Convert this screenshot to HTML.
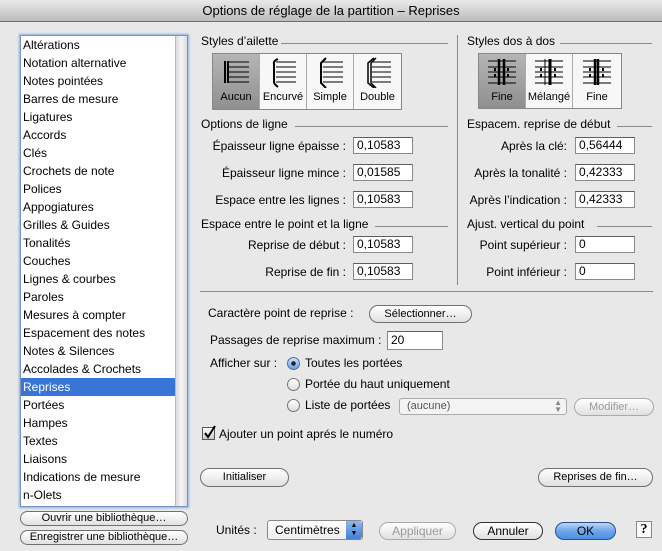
<!DOCTYPE html>
<html><head><meta charset="utf-8"><style>
*{margin:0;padding:0;box-sizing:border-box}
body{width:662px;height:551px;background:#e8e8e8;font-family:"Liberation Sans",sans-serif;font-size:12px;color:#000;position:relative;overflow:hidden}
.a{position:absolute;white-space:nowrap}
.title{left:0;top:0;width:662px;height:22px;background:linear-gradient(#e9e9e9,#bdbdbd);border-bottom:1px solid #6f6f6f;text-align:center;font-size:13px;line-height:22px}
.list{left:20px;top:35px;width:168px;height:472px;background:#fff;border:1px solid #7a93c0;box-shadow:0 0 2px 1px #8ab0e0}
.list div{height:18px;line-height:18px;padding-left:2px}
.list .sel{background:#3875d7;color:#fff}
.sb{position:absolute;right:0;top:0;width:12px;height:100%;background:linear-gradient(90deg,#dcdcdc,#f4f4f4,#dcdcdc);border-left:1px solid #bbb}
.btn{position:absolute;border:1px solid #707070;border-radius:10px;background:linear-gradient(#fff,#f0f0f0 50%,#e0e0e0);text-align:center;font-size:11px}
.dis{color:#999;border-color:#aaa}
.inp{position:absolute;background:#fff;border:1px solid #8a8a8a;border-top-color:#5e5e5e;height:17px;line-height:15px;padding-left:3px;font-size:12px}
.lbl{position:absolute;text-align:right;white-space:nowrap}
.hd{position:absolute;white-space:nowrap}
.ln{position:absolute;height:1px;background:#8a8a8a}
.seg{position:absolute;border:1px solid #888;display:flex;background:#f7f7f7}
.seg div{border-right:1px solid #aaa;text-align:center;font-size:11px;padding-top:2px}
.seg div:last-child{border-right:none}
.seg .on{background:linear-gradient(#b5b5b5,#8f8f8f)}
.radio{position:absolute;width:13px;height:13px;border:1px solid #777;border-radius:50%;background:linear-gradient(#fff,#ddd)}
</style></head><body>
<div class="a title">Options de réglage de la partition – Reprises</div>

<div class="a list">
<div>Altérations</div><div>Notation alternative</div><div>Notes pointées</div><div>Barres de mesure</div><div>Ligatures</div><div>Accords</div><div>Clés</div><div>Crochets de note</div><div>Polices</div><div>Appogiatures</div><div>Grilles &amp; Guides</div><div>Tonalités</div><div>Couches</div><div>Lignes &amp; courbes</div><div>Paroles</div><div>Mesures à compter</div><div>Espacement des notes</div><div>Notes &amp; Silences</div><div>Accolades &amp; Crochets</div><div class="sel">Reprises</div><div>Portées</div><div>Hampes</div><div>Textes</div><div>Liaisons</div><div>Indications de mesure</div><div>n-Olets</div>
<span class="sb"></span>
</div>
<div class="btn" style="left:20px;top:511px;width:168px;height:15px;line-height:13px">Ouvrir une bibliothèque…</div>
<div class="btn" style="left:20px;top:530px;width:168px;height:15px;line-height:13px">Enregistrer une bibliothèque…</div>

<div class="hd" style="left:201px;top:34px">Styles d’ailette</div>
<div class="ln" style="left:281px;top:43px;width:167px"></div>
<div class="seg" style="left:212px;top:53px;width:190px;height:57px">
<div class="on" style="width:47px"><svg width="30" height="32" viewBox="0 0 30 32"><g stroke="#000"><path d="M4 5v22M7 5v22" stroke-width="2"/><path d="M8 6h20M8 11h20M8 16h20M8 21h20M8 26h20"/></g></svg><br>Aucun</div>
<div style="width:47px"><svg width="30" height="32" viewBox="0 0 30 32"><g stroke="#000" fill="none"><path d="M10 3Q5 5 6 8v18Q6 28 10 31" stroke-width="2"/><path d="M8 6h20M8 11h20M8 16h20M8 21h20M8 26h20"/></g></svg><br>Encurvé</div>
<div style="width:47px"><svg width="30" height="32" viewBox="0 0 30 32"><g stroke="#000" fill="none"><path d="M11 2L6 7v20l5 5" stroke-width="2"/><path d="M8 6h20M8 11h20M8 16h20M8 21h20M8 26h20"/></g></svg><br>Simple</div>
<div style="width:47px"><svg width="30" height="32" viewBox="0 0 30 32"><g stroke="#000" fill="none"><path d="M11 2L5 7v20l6 5M13 2L8 7v20l5 5" stroke-width="1.5"/><path d="M9 6h19M9 11h19M9 16h19M9 21h19M9 26h19"/></g></svg><br>Double</div>
</div>

<div style="position:absolute;left:457px;top:35px;width:1px;height:250px;background:#8a8a8a"></div>
<div class="hd" style="left:467px;top:34px">Styles dos à dos</div>
<div class="ln" style="left:560px;top:43px;width:92px"></div>
<div class="seg" style="left:478px;top:53px;width:144px;height:56px">
<div class="on" style="width:47px"><svg width="36" height="32" viewBox="0 0 36 32"><g stroke="#000"><path d="M4 5h28M4 11h28M4 16h28M4 21h28M4 27h28"/><path d="M15 3v26M20 3v26" stroke-width="2.5"/><path d="M11 12v3M11 18v3M24 12v3M24 18v3" stroke-width="2"/></g></svg><br>Fine</div>
<div style="width:47px"><svg width="36" height="32" viewBox="0 0 36 32"><g stroke="#000"><path d="M4 5h28M4 11h28M4 16h28M4 21h28M4 27h28"/><path d="M14 3v26" stroke-width="1"/><path d="M19 3v26" stroke-width="3"/><path d="M10 12v3M10 18v3M24 12v3M24 18v3" stroke-width="2"/></g></svg><br>Mélangé</div>
<div style="width:48px"><svg width="36" height="32" viewBox="0 0 36 32"><g stroke="#000"><path d="M4 5h28M4 11h28M4 16h28M4 21h28M4 27h28"/><path d="M16 3v26M19 3v26" stroke-width="2.5"/><path d="M11 12v3M11 18v3M24 12v3M24 18v3" stroke-width="2"/></g></svg><br>Fine</div>
</div>

<div class="hd" style="left:201px;top:117px">Options de ligne</div>
<div class="ln" style="left:295px;top:126px;width:153px"></div>
<div class="lbl" style="right:316px;top:139px">Épaisseur ligne épaisse :</div>
<div class="inp" style="left:353px;top:137px;width:60px">0,10583</div>
<div class="lbl" style="right:316px;top:166px">Épaisseur ligne mince :</div>
<div class="inp" style="left:353px;top:164px;width:60px">0,01585</div>
<div class="lbl" style="right:316px;top:193px">Espace entre les lignes :</div>
<div class="inp" style="left:353px;top:191px;width:60px">0,10583</div>
<div class="hd" style="left:201px;top:217px">Espace entre le point et la ligne</div>
<div class="ln" style="left:375px;top:226px;width:73px"></div>
<div class="lbl" style="right:316px;top:238px">Reprise de début :</div>
<div class="inp" style="left:353px;top:236px;width:60px">0,10583</div>
<div class="lbl" style="right:316px;top:265px">Reprise de fin :</div>
<div class="inp" style="left:353px;top:263px;width:60px">0,10583</div>

<div class="hd" style="left:467px;top:117px">Espacem. reprise de début</div>
<div class="ln" style="left:617px;top:126px;width:35px"></div>
<div class="lbl" style="right:95px;top:139px">Après la clé:</div>
<div class="inp" style="left:575px;top:137px;width:60px">0,56444</div>
<div class="lbl" style="right:95px;top:166px">Après la tonalité :</div>
<div class="inp" style="left:575px;top:164px;width:60px">0,42333</div>
<div class="lbl" style="right:95px;top:193px">Après l’indication :</div>
<div class="inp" style="left:575px;top:191px;width:60px">0,42333</div>
<div class="hd" style="left:467px;top:217px">Ajust. vertical du point</div>
<div class="ln" style="left:597px;top:226px;width:55px"></div>
<div class="lbl" style="right:95px;top:238px">Point supérieur :</div>
<div class="inp" style="left:575px;top:236px;width:60px">0</div>
<div class="lbl" style="right:95px;top:265px">Point inférieur :</div>
<div class="inp" style="left:575px;top:263px;width:60px">0</div>

<div class="ln" style="left:200px;top:291px;width:453px"></div>

<div class="hd" style="left:208px;top:306px">Caractère point de reprise :</div>
<div class="btn" style="left:369px;top:305px;width:103px;height:18px;line-height:16px">Sélectionner…</div>
<div class="hd" style="left:210px;top:333px">Passages de reprise maximum :</div>
<div class="inp" style="left:387px;top:331px;width:56px;height:19px;line-height:17px">20</div>
<div class="hd" style="left:210px;top:356px">Afficher sur :</div>
<div class="radio" style="left:287px;top:357px;background:radial-gradient(#222 2px,transparent 2.5px),linear-gradient(#cfe0f8,#6fa0e0);border-color:#4a6fa8"></div>
<div class="hd" style="left:305px;top:356px">Toutes les portées</div>
<div class="radio" style="left:287px;top:378px"></div>
<div class="hd" style="left:305px;top:377px">Portée du haut uniquement</div>
<div class="radio" style="left:287px;top:399px"></div>
<div class="hd" style="left:305px;top:398px">Liste de portées</div>
<div style="position:absolute;left:399px;top:398px;width:168px;height:17px;border:1px solid #aaa;border-radius:3px;background:#f3f3f3;color:#555;font-size:11px;line-height:15px;padding-left:7px">(aucune)<span style="position:absolute;right:4px;top:0;font-size:8px;line-height:7px;color:#888">▲<br>▼</span></div>
<div class="btn dis" style="left:574px;top:398px;width:80px;height:18px;line-height:16px">Modifier…</div>
<div style="position:absolute;left:202px;top:427px;width:13px;height:13px;border:1px solid #555;background:linear-gradient(#fff,#ccc)"><svg width="14" height="14" style="position:absolute;left:0;top:-3px"><path d="M2 8l3 4 7-11" stroke="#000" stroke-width="2" fill="none"/></svg></div>
<div class="hd" style="left:219px;top:427px">Ajouter un point aprés le numéro</div>

<div class="btn" style="left:200px;top:468px;width:89px;height:19px;line-height:17px">Initialiser</div>
<div class="btn" style="left:538px;top:468px;width:115px;height:19px;line-height:17px">Reprises de fin…</div>

<div class="hd" style="left:216px;top:523px">Unités :</div>
<div style="position:absolute;left:267px;top:520px;width:96px;height:20px;border:1px solid #888;border-radius:3px;background:linear-gradient(#fff,#eee);line-height:18px;padding-left:7px">Centimètres<span style="position:absolute;right:0;top:0;width:16px;height:18px;background:linear-gradient(#8db8ef,#3f7fd8);border-radius:0 3px 3px 0;color:#000;font-size:7px;line-height:8px;text-align:center;padding-top:1px">▲<br>▼</span></div>
<div class="btn dis" style="left:379px;top:522px;width:77px;height:18px;line-height:16px;font-size:12px">Appliquer</div>
<div class="btn" style="left:473px;top:522px;width:70px;height:18px;line-height:16px;font-size:12px;border-color:#333">Annuler</div>
<div class="btn" style="left:555px;top:522px;width:61px;height:18px;line-height:16px;font-size:12px;background:linear-gradient(#bcd6f6,#6ea5ea 50%,#4d8fe5);border-color:#2a4f8a">OK</div>
<div style="position:absolute;left:636px;top:521px;width:16px;height:17px;border:1px solid #888;background:#fafafa;text-align:center;font-weight:bold;font-family:'Liberation Serif',serif;font-size:14px;line-height:15px">?</div>
</body></html>
